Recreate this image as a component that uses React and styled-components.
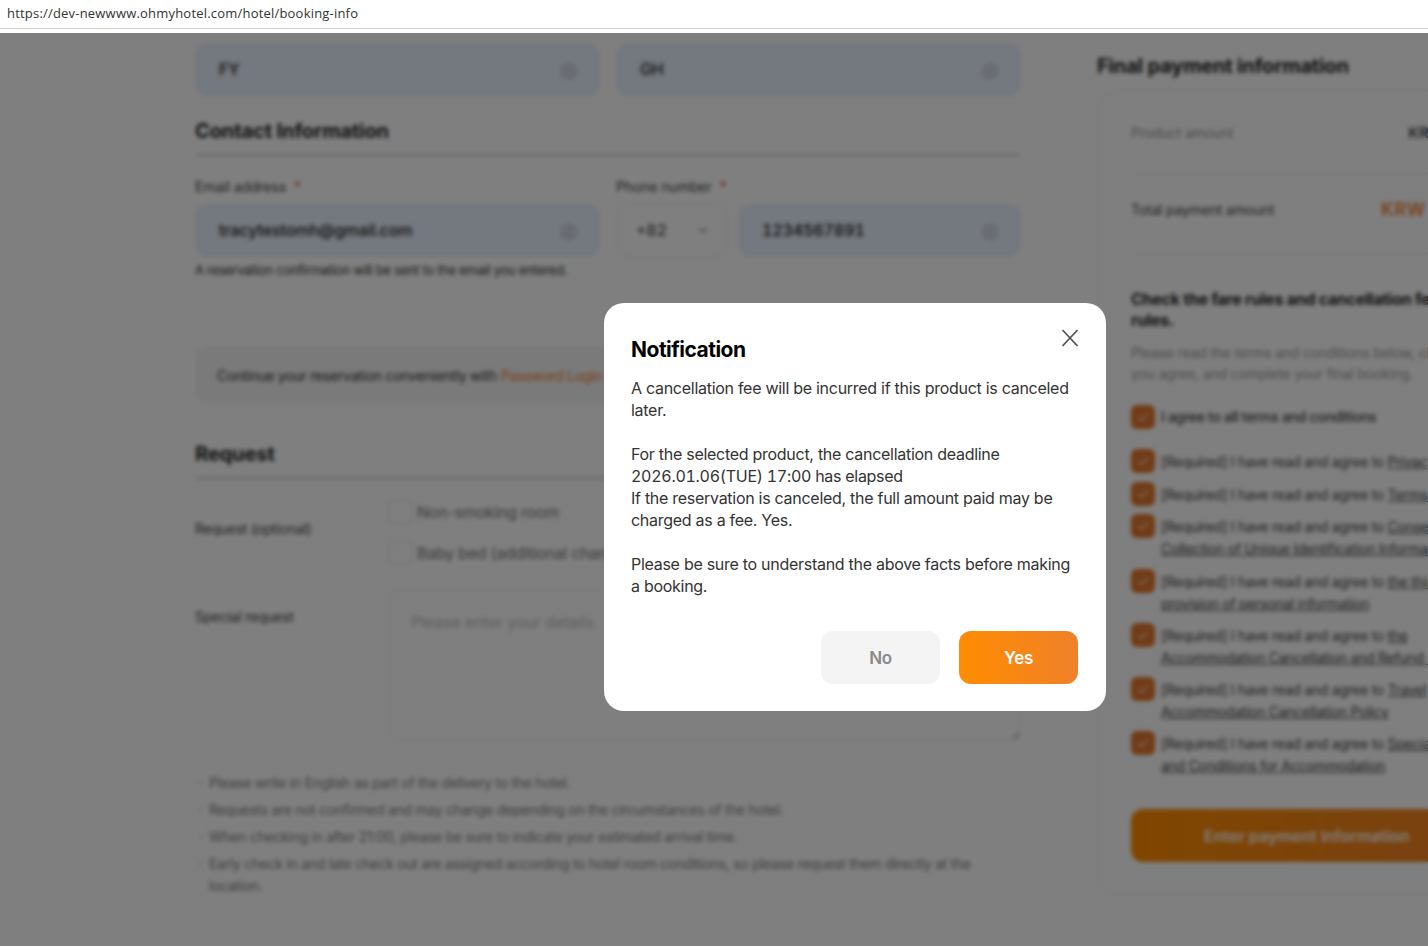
import React from "react";
import styled, { createGlobalStyle } from "styled-components";

const GlobalStyle = createGlobalStyle`
  html, body {
    margin: 0;
    padding: 0;
    height: 100%;
    overflow: hidden;
    background: #fff;
    font-family: Inter, "Liberation Sans", sans-serif;
    color: #222;
  }
  * { box-sizing: border-box; }
`;

const ORANGE = "#f0802e";

const AddressBar = styled.div`
  height: 33px;
  background: #fff;
`;

const AddressText = styled.div`
  height: 29px;
  padding-left: 7px;
  font-family: "Open Sans", sans-serif;
  font-size: 13px;
  line-height: 27px;
  letter-spacing: 0.2px;
  color: #333;
  border-bottom: 1px solid #cfcfcf;
`;

const Viewport = styled.div`
  position: relative;
  height: 913px;
  overflow: hidden;
`;

const Page = styled.div`
  display: flex;
  width: 1700px;
  padding: 10px 0 0 195px;
  gap: 76px;
`;

const LeftColumn = styled.div`
  width: 826px;
  flex: none;
`;

const RightColumn = styled.div`
  width: 464px;
  flex: none;
  padding-top: 11px;
`;

const TwoCols = styled.div`
  display: grid;
  grid-template-columns: 405px 405px;
  gap: 16px;
`;

const Field = styled.div`
  height: 53px;
  padding: 0 22px 2px 23px;
  display: flex;
  align-items: center;
  justify-content: space-between;
  background: #e8f0fe;
  border: 1px solid #e4e8f0;
  border-radius: 12px;
  font-size: 16px;
  font-weight: 500;
  letter-spacing: -0.1px;
  font-variant-numeric: tabular-nums;
  color: #222;
`;

const SectionTitle = styled.h2`
  margin: ${(p) => p.$top}px 0 0;
  padding-bottom: 8px;
  font-size: 20px;
  line-height: 30px;
  font-weight: 700;
  letter-spacing: -0.1px;
  color: #222;
  border-bottom: 2px solid #ccc;
`;

const FieldLabel = styled.div`
  margin: 21px 0 7px;
  font-size: 14px;
  line-height: 20px;
  letter-spacing: -0.1px;
  color: #444;
`;

const Star = styled.span`
  margin-left: 8px;
  color: #f03c3c;
`;

const PhoneRow = styled.div`
  display: grid;
  grid-template-columns: 112px 283px;
  gap: 10px;
`;

const CountrySelect = styled.div`
  height: 53px;
  padding: 0 19px 2px;
  display: flex;
  align-items: center;
  justify-content: space-between;
  border: 1px solid #eee;
  border-radius: 12px;
  font-size: 16px;
  font-weight: 500;
  font-variant-numeric: tabular-nums;
  color: #555;
`;

const HelpText = styled.div`
  margin-top: 4px;
  font-size: 13px;
  line-height: 18px;
  letter-spacing: -0.3px;
  color: #333;
`;

const LoginBanner = styled.div`
  margin-top: 67px;
  height: 58px;
  padding: 0 22px;
  display: flex;
  align-items: center;
  background: #f5f5f5;
  border-radius: 12px;
  font-size: 14px;
  letter-spacing: -0.27px;
  color: #333;
`;

const BannerLink = styled.span`
  margin-left: 4px;
  color: ${ORANGE};
`;

const OptionRow = styled.div`
  display: grid;
  grid-template-columns: 194px 1fr;
  margin-top: ${(p) => p.$top}px;
`;

const RowLabel = styled.div`
  font-size: 14px;
  line-height: 20px;
  letter-spacing: -0.25px;
  color: #444;
  padding-top: ${(p) => p.$top}px;
`;

const OptionList = styled.div`
  display: flex;
  flex-direction: column;
  gap: 17px;
`;

const Option = styled.div`
  display: flex;
  align-items: center;
  gap: 4px;
  height: 24px;
  font-size: 16px;
  letter-spacing: -0.25px;
  color: #777;
`;

const EmptyBox = styled.span`
  width: 24px;
  height: 24px;
  border: 1px solid #e2e2e2;
  border-radius: 6px;
  background: #fff;
`;

const SpecialRequest = styled.textarea`
  display: block;
  width: 632px;
  height: 152px;
  padding: 22px 21px;
  border: 1px solid #eee;
  border-radius: 12px;
  outline: none;
  background: #fff;
  font-family: Inter, sans-serif;
  font-size: 16px;
  letter-spacing: -0.15px;
  &::placeholder { color: #bbb; }
`;

const Notes = styled.ul`
  margin: 31px 0 0;
  padding: 0 30px 0 14px;
  list-style: none;
`;

const Note = styled.li`
  position: relative;
  margin-bottom: 5px;
  font-size: 14px;
  line-height: 22px;
  letter-spacing: -0.3px;
  color: #808080;
  &::before {
    content: "·";
    position: absolute;
    left: -10px;
  }
`;

const PaymentTitle = styled.h2`
  margin: 0;
  font-size: 20px;
  line-height: 24px;
  font-weight: 700;
  letter-spacing: -0.15px;
  color: #222;
`;

const PaymentCard = styled.div`
  margin-top: 12px;
  height: 805px;
  padding: 21px 33px;
  border: 1px solid #ececec;
  border-radius: 24px;
`;

const AmountRow = styled.div`
  display: flex;
  justify-content: space-between;
  align-items: center;
  height: ${(p) => p.$height}px;
  padding: 0 20px ${(p) => p.$pad}px 0;
  border-bottom: 1px solid #f0f0f0;
  font-size: 14px;
  letter-spacing: -0.2px;
  color: ${(p) => p.$color};
`;

const AmountValue = styled.span`
  font-size: ${(p) => p.$size}px;
  font-weight: 600;
  letter-spacing: ${(p) => p.$spacing}px;
  color: ${(p) => p.$color};
`;

const RulesTitle = styled.h3`
  margin: 35px 0 0;
  max-width: 350px;
  font-size: 16px;
  line-height: 21px;
  font-weight: 700;
  letter-spacing: -0.25px;
  color: #222;
`;

const RulesIntro = styled.p`
  margin: 11px 0 0;
  font-size: 14px;
  line-height: 21px;
  letter-spacing: -0.2px;
  color: #999;
`;

const AgreeRow = styled.div`
  display: flex;
  gap: 6px;
  margin-top: ${(p) => p.$top}px;
  font-size: 14px;
  line-height: 22px;
  letter-spacing: -0.3px;
  color: #444;
`;

const AgreeText = styled.span`
  padding-top: ${(p) => p.$pad}px;
  font-weight: ${(p) => p.$weight};
  white-space: pre;
`;

const CheckBox = styled.span`
  flex: none;
  width: 24px;
  height: 24px;
  display: flex;
  align-items: center;
  justify-content: center;
  background: #e2762e;
  border-radius: 6px;
`;

const TermLink = styled.span`
  text-decoration: underline;
`;

const PaymentButton = styled.div`
  margin-top: 32px;
  height: 53px;
  display: flex;
  align-items: center;
  padding-left: 73px;
  background: linear-gradient(90deg, #ff8c00, #f0812a);
  border-radius: 12px;
  font-size: 16px;
  font-weight: 600;
  color: #fff;
`;

const ClearSvg = styled.svg`
  flex: none;
  margin-top: 4px;
`;

const Overlay = styled.div`
  position: absolute;
  inset: 0;
  padding: 270px 0 0 604px;
  background: rgba(0, 0, 0, 0.5);
  backdrop-filter: blur(2px);
`;

const Modal = styled.div`
  position: relative;
  width: 502px;
  height: 408px;
  padding: 32px 28px 27px 27px;
  background: #fff;
  border-radius: 20px;
`;

const ModalTitle = styled.h2`
  margin: 0;
  font-size: 21px;
  line-height: 30px;
  font-weight: 700;
  letter-spacing: -0.5px;
  color: #000;
`;

const ModalBody = styled.p`
  margin: 12px 0 0;
  font-size: 16px;
  line-height: 22px;
  letter-spacing: -0.28px;
  color: #333;
`;

const DateText = styled.span`
  font-variant-numeric: tabular-nums;
`;

const CloseButton = styled.button`
  position: absolute;
  top: 24px;
  right: 24px;
  width: 24px;
  height: 22px;
  padding: 0;
  background: none;
  border: none;
  color: #555;
`;

const ModalActions = styled.div`
  display: flex;
  justify-content: flex-end;
  gap: 19px;
  margin-top: 34px;
`;

const ActionButton = styled.button`
  width: 119px;
  height: 53px;
  border: none;
  border-radius: 12px;
  font-family: Inter, sans-serif;
  font-size: 17px;
  font-weight: 600;
  letter-spacing: -0.3px;
  color: ${(p) => (p.$primary ? "#fff" : "#8a8a8a")};
  background: ${(p) =>
    p.$primary ? "linear-gradient(90deg, #ff8c00, #f0812a)" : "#f4f4f4"};
`;

const ClearIcon = () => (
  <ClearSvg width="16" height="16" viewBox="0 0 16 16" fill="none" stroke="#999" strokeWidth="1.2">
    <circle cx="8" cy="8" r="6.5" />
    <path d="M5.8 5.8l4.4 4.4M10.2 5.8l-4.4 4.4" />
  </ClearSvg>
);

const ChevronIcon = () => (
  <svg width="10" height="6" viewBox="0 0 10 6" fill="none" stroke="#888" strokeWidth="1.3">
    <path d="M1 1l4 4 4-4" />
  </svg>
);

const CheckIcon = () => (
  <svg width="14" height="14" viewBox="0 0 14 14" fill="none" stroke="#fff" strokeOpacity="0.75" strokeWidth="1.4">
    <path d="M2 7l3.5 3.5L12 3.5" />
  </svg>
);

const agreements = [
  { top: 20, term: "Privacy Policy" },
  { top: 9, term: "Terms of Service" },
  { top: 8, term: "Consent to the\nCollection of Unique Identification Information" },
  { top: 9, term: "the third-party\nprovision of personal information" },
  { top: 8, term: "the\nAccommodation Cancellation and Refund Policy" },
  { top: 8, term: "Travel\nAccommodation Cancellation Policy" },
  { top: 8, term: "Special Terms\nand Conditions for Accommodation" },
];

const notes = [
  "Please write in English as part of the delivery to the hotel.",
  "Requests are not confirmed and may change depending on the circumstances of the hotel.",
  "When checking in after 21:00, please be sure to indicate your estimated arrival time.",
  "Early check in and late check out are assigned according to hotel room conditions, so please request them directly at the location.",
];

export default function App() {
  return (
    <>
      <GlobalStyle />
      <AddressBar>
        <AddressText>https://dev-newwww.ohmyhotel.com/hotel/booking-info</AddressText>
      </AddressBar>
      <Viewport>
        <Page>
          <LeftColumn>
            <TwoCols>
              <Field>FY<ClearIcon /></Field>
              <Field>GH<ClearIcon /></Field>
            </TwoCols>
            <SectionTitle $top={20}>Contact Information</SectionTitle>
            <TwoCols>
              <div>
                <FieldLabel>Email address<Star>*</Star></FieldLabel>
                <Field>tracytestomh@gmail.com<ClearIcon /></Field>
              </div>
              <div>
                <FieldLabel>Phone number<Star>*</Star></FieldLabel>
                <PhoneRow>
                  <CountrySelect>+82<ChevronIcon /></CountrySelect>
                  <Field>1234567891<ClearIcon /></Field>
                </PhoneRow>
              </div>
            </TwoCols>
            <HelpText>A reservation confirmation will be sent to the email you entered.</HelpText>
            <LoginBanner>
              Continue your reservation conveniently with<BannerLink>Password Login</BannerLink>
            </LoginBanner>
            <SectionTitle $top={35}>Request</SectionTitle>
            <OptionRow $top={21}>
              <RowLabel $top={19}>Request (optional)</RowLabel>
              <OptionList>
                <Option><EmptyBox />Non-smoking room</Option>
                <Option><EmptyBox />Baby bed (additional charge)</Option>
              </OptionList>
            </OptionRow>
            <OptionRow $top={24}>
              <RowLabel $top={18}>Special request</RowLabel>
              <SpecialRequest placeholder="Please enter your details." readOnly />
            </OptionRow>
            <Notes>
              {notes.map((n) => (
                <Note key={n}>{n}</Note>
              ))}
            </Notes>
          </LeftColumn>
          <RightColumn>
            <PaymentTitle>Final payment information</PaymentTitle>
            <PaymentCard>
              <AmountRow $height={62} $pad={20} $color="#999">
                Product amount<AmountValue $size={15} $spacing={0} $color="#444">KRW 120,000</AmountValue>
              </AmountRow>
              <AmountRow $height={80} $pad={8} $color="#444">
                Total payment amount<AmountValue $size={18} $spacing={0.7} $color={ORANGE}>KRW 120,000</AmountValue>
              </AmountRow>
              <RulesTitle>Check the fare rules and cancellation fee rules.</RulesTitle>
              <RulesIntro>
                Please read the terms and conditions below, check whether you agree, and complete your final booking.
              </RulesIntro>
              <AgreeRow $top={21}>
                <CheckBox><CheckIcon /></CheckBox>
                <AgreeText $pad={1} $weight={500}>I agree to all terms and conditions</AgreeText>
              </AgreeRow>
              {agreements.map((a) => (
                <AgreeRow key={a.term} $top={a.top}>
                  <CheckBox><CheckIcon /></CheckBox>
                  <AgreeText $pad={2} $weight={400}>[Required] I have read and agree to <TermLink>{a.term}</TermLink></AgreeText>
                </AgreeRow>
              ))}
              <PaymentButton>Enter payment information</PaymentButton>
            </PaymentCard>
          </RightColumn>
        </Page>
        <Overlay>
          <Modal>
            <ModalTitle>Notification</ModalTitle>
            <CloseButton aria-label="Close">
              <svg width="24" height="22" viewBox="0 0 24 22" fill="none" stroke="currentColor" strokeWidth="1.8">
                <path d="M4.5 3l15 16M19.5 3l-15 16" />
              </svg>
            </CloseButton>
            <ModalBody>
              A cancellation fee will be incurred if this product is canceled later.
              <br /><br />
              For the selected product, the cancellation deadline
              <br />
              <DateText>2026.01.06(TUE) 17:00 has elapsed</DateText>
              <br />
              If the reservation is canceled, the full amount paid may be charged as a fee. Yes.
              <br /><br />
              Please be sure to understand the above facts before making a booking.
            </ModalBody>
            <ModalActions>
              <ActionButton>No</ActionButton>
              <ActionButton $primary>Yes</ActionButton>
            </ModalActions>
          </Modal>
        </Overlay>
      </Viewport>
    </>
  );
}
